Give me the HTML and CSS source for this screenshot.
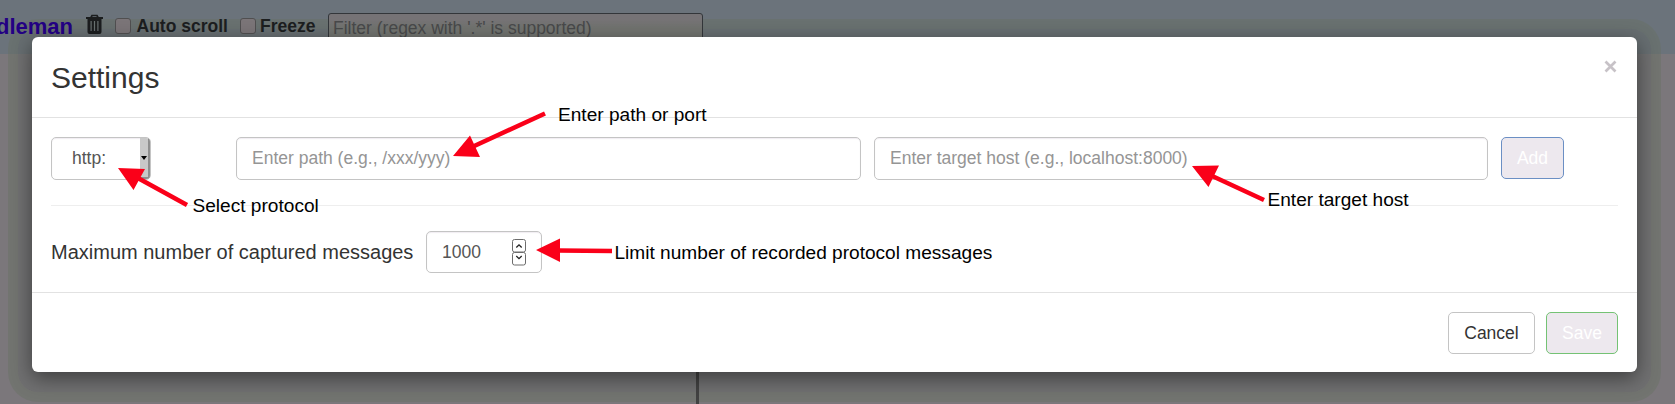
FILE: index.html
```html
<!DOCTYPE html>
<html lang="en">
<head>
<meta charset="utf-8">
<title>Settings</title>
<link rel="stylesheet" href="styles.css">
</head>
<body>
<div class="halo"></div>
<div class="page">
  <header class="toolbar">
    <a class="brand">dleman</a>
    <svg class="trash" width="17" height="20" viewBox="0 0 17 20" fill="none" stroke="#1b1d1e">
      <path d="M5 3.500L6 1.500H11L12 3.500" stroke-width="1.700"/>
      <path d="M0 4H17" stroke-width="2"/>
      <path fill="#1b1d1e" stroke="none" fill-rule="evenodd" d="M1.500 4H15.500V18Q15.500 20 13.500 20H3.500Q1.500 20 1.500 18ZM4.500 7V17H5.700V7ZM7.900 7V17H9.100V7ZM11.300 7V17H12.500V7Z"/>
    </svg>
    <span class="box"></span><b class="auto">Auto scroll</b>
    <span class="box"></span><b class="freeze">Freeze</b>
    <div class="filter">Filter (regex with '.*' is supported)</div>
  </header>
  <main class="panes"><div class="list"></div></main>
</div>

<section class="modal">
  <div class="modal-header">
    <h1>Settings</h1>
    <svg class="close" width="13" height="13" viewBox="0 0 13 13"><path d="M1.500 1.500L11.500 11.500M11.500 1.500L1.500 11.500" stroke="#c7c2c7" stroke-width="2.700"/></svg>
  </div>
  <div class="modal-body">
    <div class="proxy-row">
      <div class="field select"><span>http:</span><i class="arrow"><svg width="6" height="4" viewBox="0 0 6 4"><path d="M0 0H6L3 4Z"/></svg></i></div>
      <div class="field hint">Enter path (e.g., /xxx/yyy)</div>
      <div class="field hint">Enter target host (e.g., localhost:8000)</div>
      <div class="btn add">Add</div>
    </div>
    <div class="limit-row">
      <label>Maximum number of captured messages</label>
      <div class="field number"><span>1000</span>
        <svg width="14" height="27" viewBox="0 0 14 27" fill="none" stroke="#6c6c6c"><rect x=".5" y=".5" width="13" height="12.500" rx="2"/><rect x=".5" y="13.500" width="13" height="12.500" rx="2"/><path d="M4.300 8.500L7 5.800L9.700 8.500M4.300 17L7 19.700L9.700 17" stroke="#222" stroke-width="1.300"/></svg>
      </div>
    </div>
  </div>
  <div class="modal-footer">
    <div class="btn cancel">Cancel</div>
    <div class="btn save">Save</div>
  </div>
</section>

<div class="notes">
  <svg width="1675" height="404" viewBox="0 0 1675 404" fill="#fa0019" stroke="#fa0019">
    <path d="M545 113.500L471 147.500M187 205L136 177M1264 200L1210 175M612 251L558 250.500" stroke-width="4.600"/>
    <path stroke="none" d="M453 156L470 135.500L480 157ZM118 168L145 169L133.500 190ZM1192 166L1219 165.500L1208.500 187ZM536 250L560 238.500V262Z"/>
  </svg>
  <span class="note path">Enter path or port</span>
  <span class="note protocol">Select protocol</span>
  <span class="note host">Enter target host</span>
  <span class="note limit">Limit number of recorded protocol messages</span>
</div>
</body>
</html>
```
FILE: styles.css
```css
* { box-sizing: border-box; }
body {
  margin: 0;
  width: 1675px;
  height: 404px;
  position: relative;
  z-index: 0;
  overflow: hidden;
  background: linear-gradient(#6b737b 54px, #7b777b 54px);
  font: 17.5px/20px "Liberation Sans", Arial, sans-serif;
  color: #333;
}
/* soft outer band of the dialog's shadow, under the toolbar text */
.halo {
  position: absolute;
  z-index: -1;
  left: 8px;
  top: 19px;
  width: 1653px;
  height: 383px;
  border: 10px solid rgba(102, 111, 98, .42);
  border-radius: 30px;
  background: rgba(100, 104, 101, .45) padding-box;
}
.page { height: 404px; display: flex; flex-direction: column; }
.toolbar {
  height: 54px;
  flex: none;
  display: flex;
  align-items: flex-start;
  color: #1c1e1f;
}
.brand { width: 86px; margin-left: -4px; padding: 16px 0 0; font-size: 22px; line-height: 21px; font-weight: bold; color: #230084; }
.trash { margin: 14px 0 0 4px; flex: none; }
.box {
  width: 16px;
  height: 16px;
  margin: 18px 0 0;
  border: 1px solid #504f50;
  border-radius: 3px;
  background: #7b7578;
  flex: none;
}
.trash + .box { margin-left: 12px; }
.auto, .freeze { padding-top: 16px; white-space: nowrap; flex: none; }
.auto { width: 103px; margin-left: 5.500px; }
.freeze { width: 68px; margin-left: 4.500px; }
.filter {
  width: 375px;
  height: 38px;
  margin-top: 13px;
  padding: 4px 4px;
  border: 1px solid #33363a;
  border-radius: 3px;
  background: linear-gradient(#767376 5px, #71736f 14px);
  color: #48494a;
}
.panes { flex: 1; display: flex; }
.list { width: 699px; border-right: 3px solid #424242; }

.modal {
  position: absolute;
  left: 32px;
  top: 37px;
  width: 1605px;
  height: 335px;
  display: flex;
  flex-direction: column;
  background: #fff;
  border-radius: 6px;
  box-shadow: 0 6px 20px rgba(0, 0, 0, .45);
}
.modal-header {
  height: 81px;
  padding: 23px 19px 0;
  display: flex;
  justify-content: space-between;
  border-bottom: 1px solid #e2e2e2;
}
h1 { margin: 0; font-size: 30px; line-height: 36px; font-weight: normal; }
.close { margin: 0 1px 0 0; }
.modal-body { height: 174px; padding: 19px 19px 0; }
.proxy-row {
  height: 69px;
  display: grid;
  grid-template-columns: 172px 625px 614px 63px;
  align-items: start;
  border-bottom: 1px solid #eee;
  column-gap: 13px;
}
.field {
  height: 43px;
  padding: 10px 15px;
  border: 1px solid #c4c4c4;
  border-radius: 5px;
  color: #555;
  box-shadow: inset 0 1px 1px rgba(80, 30, 90, .08);
}
.hint { color: #959595; }
.select {
  width: 100px;
  padding: 0 0 0 20px;
  display: flex;
  justify-content: space-between;
  overflow: hidden;
}
.select span { padding-top: 10px; }
.arrow {
  width: 10px;
  display: flex;
  align-items: center;
  justify-content: center;
  background: #c8c8c8;
  border-right: 2px solid #8e8e8e;
  border-bottom: 2px solid #8e8e8e;
}
.limit-row { display: flex; gap: 12px; padding-top: 25px; }
label { width: 363px; font-size: 20px; line-height: 42px; white-space: nowrap; }
.number { width: 116px; height: 42px; padding: 0 15px; display: flex; align-items: center; justify-content: space-between; }
.btn { height: 42px; padding-top: 10px; border: 1px solid #c4c4c4; border-radius: 5px; text-align: center; }
.add, .save { background: #ede8ee; color: #fff; }
.add { border-color: #6b8fc4; }
.save { width: 72px; border-color: #74c274; }
.cancel { width: 87px; }
.modal-footer {
  height: 80px;
  padding: 19px 19px 0;
  display: flex;
  justify-content: flex-end;
  gap: 11px;
  border-top: 1px solid #e2e2e2;
}

.notes { position: absolute; inset: 0; }
.note { position: absolute; color: #000; font-size: 19.1px; line-height: 22px; white-space: nowrap; }
.path { left: 558px; top: 104px; }
.protocol { left: 192.500px; top: 195px; }
.host { left: 1267.500px; top: 189px; }
.limit { left: 614.500px; top: 242px; }
```
